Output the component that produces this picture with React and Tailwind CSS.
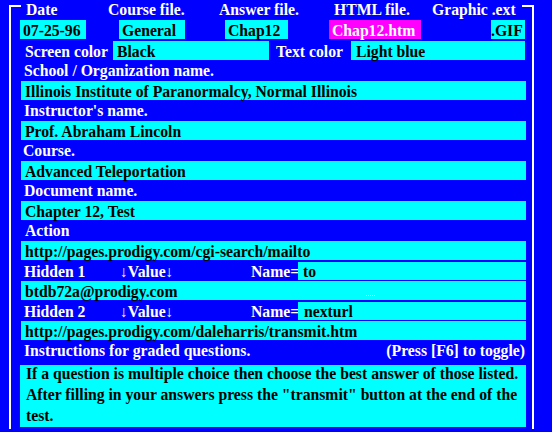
import React from "react";

const font = { fontFamily: '"Liberation Serif", "Times New Roman", serif' };

function Box({ className = "", children }) {
    return (
        <div className={`h-[19px] bg-[#00ffff] text-black leading-[22px] pl-[4px] whitespace-nowrap ${className}`}>
            {children}
        </div>
    );
}

function Label({ children, className = "" }) {
    return <div className={`h-[20px] leading-[20px] pl-[13px] text-white whitespace-nowrap ${className}`}>{children}</div>;
}

export default function App() {
    return (
        <div className="w-[552px] h-[432px] bg-[#0000ff] overflow-hidden font-bold text-[15.7px]" style={font}>
            <div className="ml-[9px] mt-[5px] w-[525px] h-[424px] border-x-2 border-t-2 border-white">
                {/* header labels sit on the top frame line */}
                <div className="-mt-[7px] ml-[10px] w-[501px] h-[20px] leading-[20px] bg-[#0000ff] text-white flex whitespace-nowrap">
                    <span className="w-[87px] pl-[5px]">Date</span>
                    <span className="w-[111px]">Course file.</span>
                    <span className="w-[115px]">Answer file.</span>
                    <span className="w-[98px]">HTML file.</span>
                    <span>Graphic .ext</span>
                </div>

                <div className="flex h-[20px] ml-[9px]">
                    <Box className="w-[66px] !pl-[3px]">07-25-96</Box>
                    <Box className="w-[66px] ml-[33px] !pl-[3px]">General</Box>
                    <Box className="w-[63px] ml-[40px] !pl-[3px]">Chap12</Box>
                    <Box className="w-[92px] ml-[41px] !bg-[#ff00ff] !text-white !pl-[3px]">Chap12.htm</Box>
                    <Box className="w-[34px] ml-[70px] !pl-0">.GIF</Box>
                </div>

                <div className="flex h-[20px] mt-px text-white leading-[22px]">
                    <span className="w-[102px] pl-[14px]">Screen color</span>
                    <Box className="w-[156px]">Black</Box>
                    <span className="w-[82px] pl-[7px]">Text color</span>
                    <Box className="w-[174px] !pl-[5px]">Light blue</Box>
                </div>

                <Label>School / Organization name.</Label>
                <div className="h-[20px] ml-[10px]">
                    <Box className="w-[505px]">Illinois Institute of Paranormalcy, Normal Illinois</Box>
                </div>
                <Label>Instructor's name.</Label>
                <div className="h-[20px] ml-[10px]">
                    <Box className="w-[505px]">Prof. Abraham Lincoln</Box>
                </div>
                <Label className="!pl-[12px]">Course.</Label>
                <div className="h-[20px] ml-[10px]">
                    <Box className="w-[505px]">Advanced Teleportation</Box>
                </div>
                <Label>Document name.</Label>
                <div className="h-[20px] ml-[10px]">
                    <Box className="w-[505px]">Chapter 12, Test</Box>
                </div>
                <Label className="!pl-[14px]">Action</Label>
                <div className="h-[20px] ml-[10px]">
                    <Box className="w-[505px]">http://pages.prodigy.com/cgi-search/mailto</Box>
                </div>

                <div className="flex h-[20px] text-white leading-[21px] whitespace-nowrap">
                    <span className="w-[109px] pl-[13px]">Hidden 1</span>
                    <span className="w-[131px]">↓Value↓</span>
                    <span className="w-[47px]">Name=</span>
                    <Box className="w-[228px] !h-[18px] !leading-[20px] !pl-[5px] mt-px">to</Box>
                </div>
                <div className="h-[20px] ml-[10px]">
                    <Box className="w-[505px] relative">
                        btdb72a@prodigy.com
                        <span className="absolute left-[345px] top-[14px] w-[9px] border-b border-dotted border-white"></span>
                    </Box>
                </div>
                <div className="flex h-[20px] text-white leading-[21px] whitespace-nowrap">
                    <span className="w-[109px] pl-[13px]">Hidden 2</span>
                    <span className="w-[131px]">↓Value↓</span>
                    <span className="w-[47px]">Name=</span>
                    <Box className="w-[228px] !h-[18px] !leading-[20px] !pl-[6px] mt-px">nexturl</Box>
                </div>
                <div className="h-[20px] ml-[10px]">
                    <Box className="w-[505px]">http://pages.prodigy.com/daleharris/transmit.htm</Box>
                </div>

                <div className="flex justify-between h-[20px] leading-[20px] text-white w-[514px] pl-[13px] whitespace-nowrap">
                    <span>Instructions for graded questions.</span>
                    <span>(Press [F6] to toggle)</span>
                </div>
                <div className="mt-[4px] ml-[9px] w-[506px] h-[62px] bg-[#00ffff] text-black pl-[6px] whitespace-nowrap overflow-hidden">
                    <div className="-mt-[2px] leading-[21px]">
                        If a question is multiple choice then choose the best answer of those listed.
                        <br />
                        After filling in your answers press the "transmit" button at the end of the
                        <br />
                        test.
                    </div>
                </div>
            </div>
        </div>
    );
}
